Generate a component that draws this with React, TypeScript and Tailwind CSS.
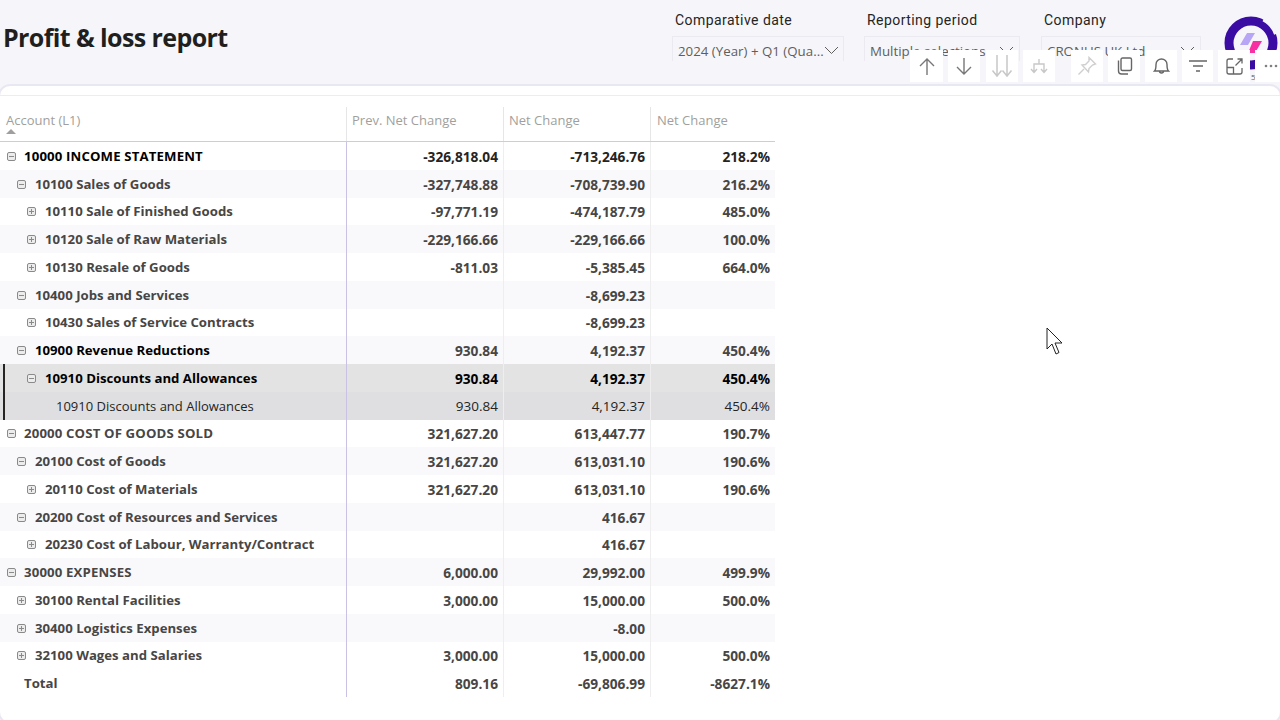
const rows: [string, number, number, string, string, string, string?][] = [
  ["10000 INCOME STATEMENT", 0, 0, "-326,818.04", "-713,246.76", "218.2%", "k"],
  ["10100 Sales of Goods", 1, 0, "-327,748.88", "-708,739.90", "216.2%"],
  ["10110 Sale of Finished Goods", 2, 1, "-97,771.19", "-474,187.79", "485.0%"],
  ["10120 Sale of Raw Materials", 2, 1, "-229,166.66", "-229,166.66", "100.0%"],
  ["10130 Resale of Goods", 2, 1, "-811.03", "-5,385.45", "664.0%"],
  ["10400 Jobs and Services", 1, 0, "", "-8,699.23", ""],
  ["10430 Sales of Service Contracts", 2, 1, "", "-8,699.23", ""],
  ["10900 Revenue Reductions", 1, 0, "930.84", "4,192.37", "450.4%", "m"],
  ["10910 Discounts and Allowances", 2, 0, "930.84", "4,192.37", "450.4%", "s"],
  ["10910 Discounts and Allowances", 3, 2, "930.84", "4,192.37", "450.4%", "l"],
  ["20000 COST OF GOODS SOLD", 0, 0, "321,627.20", "613,447.77", "190.7%"],
  ["20100 Cost of Goods", 1, 0, "321,627.20", "613,031.10", "190.6%"],
  ["20110 Cost of Materials", 2, 1, "321,627.20", "613,031.10", "190.6%"],
  ["20200 Cost of Resources and Services", 1, 0, "", "416.67", ""],
  ["20230 Cost of Labour, Warranty/Contract", 2, 1, "", "416.67", ""],
  ["30000 EXPENSES", 0, 0, "6,000.00", "29,992.00", "499.9%"],
  ["30100 Rental Facilities", 1, 1, "3,000.00", "15,000.00", "500.0%"],
  ["30400 Logistics Expenses", 1, 1, "", "-8.00", ""],
  ["32100 Wages and Salaries", 1, 1, "3,000.00", "15,000.00", "500.0%"],
  ["Total", 0, 2, "809.16", "-69,806.99", "-8627.1%"],
];

function Box({ plus }: { plus: boolean }) {
  return (
    <svg width="9" height="9" viewBox="0 0 9 9" fill="none" stroke="#8a8a8a" strokeWidth="1" className="shrink-0">
      <rect x="0.5" y="0.5" width="8" height="8" rx="1.5" fill="#ececec" />
      <path d="M2 4.500h5" />
      {plus && <path d="M4.500 2v5" />}
    </svg>
  );
}

function Tool({ children, className }: { children: React.ReactNode; className: string }) {
  return <div className={"bg-white h-[32px] flex items-center justify-center " + className}>{children}</div>;
}

function Filter({ label, value, w, ml }: { label: string; value: string; w: string; ml: string }) {
  return (
    <div className={"flex flex-col " + w + " " + ml}>
      <div className="h-[36px] pt-[12px] pl-[3px] text-[14px] leading-[16px] tracking-[0.45px] text-[#252423] font-['Roboto',sans-serif] whitespace-nowrap">{label}</div>
      <div className="h-[25px] border border-b-0 border-[#eaeaf0] pl-[5px] pr-[5px] pt-[5px] flex justify-between overflow-hidden">
        <span className="text-[13.3px] leading-[19px] text-[#605e5c] whitespace-nowrap">{value}</span>
        <svg width="15" height="9" viewBox="0 0 15 9" fill="none" stroke="#605e5c" strokeWidth="1" className="mt-[4px] shrink-0"><path d="M1 1l6.500 6.500L14 1" /></svg>
      </div>
    </div>
  );
}

export default function App() {
  return (
    <div className="relative w-[1280px] h-[720px] overflow-hidden bg-[#f6f6fa] font-['Open_Sans','Noto_Sans',sans-serif]">
      <div className="absolute -left-[2px] top-[84px] w-[1284px] h-[640px] bg-white rounded-[12px] border-2 border-[#e8e8f2]" />
      <div className="absolute left-0 top-[95px] w-[1280px] border-t border-[#ececf4]" />

      <div className="relative h-[85px] flex">
        <h1 className="ml-[3px] mt-[20px] text-[25px] leading-[34px] font-bold text-[#201f1e] whitespace-nowrap tracking-[-0.6px] w-[669px]">Profit &amp; loss report</h1>
        <Filter label="Comparative date" value="2024 (Year) + Q1 (Qua..." w="w-[172px]" ml="" />
        <Filter label="Reporting period" value="Multiple selections" w="w-[156px]" ml="ml-[20px]" />
        <Filter label="Company" value="CRONUS UK Ltd" w="w-[160px]" ml="ml-[21px]" />
      </div>

      <svg className="absolute left-[1224px] top-[16px]" width="54" height="54" viewBox="0 0 54 54" fill="none">
        <circle cx="27" cy="27" r="22" stroke="#3a0ca3" strokeWidth="9" />
        <path d="M39.500 3.500A26.500 26.500 0 0 1 52 18" stroke="#f6f6fa" strokeWidth="4" />
        <path d="M16 29l7-12h8l-7 12z" fill="#b7a5f5" />
        <path d="M24 37l5-12h9l-7 12z" fill="#f72fa3" />
      </svg>
      <div className="absolute left-[1251px] top-[63px] w-[5px] h-[6px] bg-[#3a0ca3]" />
      <div className="absolute left-[1251px] top-[72px] text-[8px] leading-[9px] text-[#605e5c]">5</div>

      <div className="absolute left-[910px] top-[50px] flex gap-[5px]">
        <Tool className="w-[33px]"><svg width="18" height="19" viewBox="0 0 18 19" fill="none" stroke="#777" strokeWidth="1.400"><path d="M9 18V2M2 9l7-7 7 7" /></svg></Tool>
        <Tool className="w-[32px]"><svg width="18" height="19" viewBox="0 0 18 19" fill="none" stroke="#777" strokeWidth="1.400"><path d="M9 1v16M2 10l7 7 7-7" /></svg></Tool>
        <Tool className="w-[32px] ml-[1px]"><svg width="22" height="24" viewBox="0 0 22 24" fill="none" stroke="#c8c8c8" strokeWidth="1.500"><path d="M6 1v21M1.500 16.500L6 22l4.500-5.500M16 1v21M11.500 16.500L16 22l4.500-5.500" /></svg></Tool>
        <Tool className="w-[32px]"><svg width="18" height="16" viewBox="0 0 18 16" fill="none" stroke="#c8c8c8" strokeWidth="1.400"><path d="M9 1v5M4 14V6h10v8M1 11l3 3.500L7 11M11 11l3 3.500 3-3.500" /></svg></Tool>
      </div>
      <div className="absolute left-[1071px] top-[50px] flex gap-[5px]">
        <Tool className="w-[32px]"><svg width="20" height="20" viewBox="0 0 20 20" fill="none" stroke="#cfcfcf" strokeWidth="1.400"><path d="M12 1.500l6.500 6.500-3 1-3.500 3.500-.5 3.500L5 9l3.500-.5L12 5zM7 13l-5.500 5.500" /></svg></Tool>
        <Tool className="w-[32px]"><svg width="17" height="18" viewBox="0 0 17 18" fill="none" stroke="#666" strokeWidth="1.400"><rect x="5" y="1" width="10.500" height="12.500" rx="1.500" /><path d="M2.500 3.500v10.500a3 3 0 0 0 3 3H12" /></svg></Tool>
        <Tool className="w-[32px]"><svg width="17" height="18" viewBox="0 0 17 18" fill="none" stroke="#666" strokeWidth="1.400"><path d="M1.500 14c1.500-1.500 1.500-4 1.500-6.500a5.500 5.500 0 0 1 11 0c0 2.500 0 5 1.500 6.500zM6.500 14a2 2 0 0 0 4 0" /></svg></Tool>
        <Tool className="w-[31px]"><svg width="18" height="12" viewBox="0 0 18 12" fill="none" stroke="#666" strokeWidth="1.400"><path d="M0 1h18M4 6h10M7 11h4" /></svg></Tool>
        <Tool className="w-[32px]"><svg width="17" height="17" viewBox="0 0 17 17" fill="none" stroke="#666" strokeWidth="1.300"><path d="M7 1H3a2 2 0 0 0-2 2v11a2 2 0 0 0 2 2h11a2 2 0 0 0 2-2v-4M9.500 7.500L16 1M11.500 1H16v4.500M1 9.500h6.500V16" /></svg></Tool>
        <Tool className="w-[25px] justify-end pr-[2px]"><svg width="14" height="4" viewBox="0 0 14 4" fill="#808080"><circle cx="2" cy="2" r="1.300" /><circle cx="7" cy="2" r="1.300" /><circle cx="12" cy="2" r="1.300" /></svg></Tool>
      </div>

      <div className="relative mt-[22px] w-[775px]">
        <div className="flex h-[35px] border-b border-[#cfcbdc] text-[#a19f9d] text-[13px] leading-[19px]">
          <div className="w-[347px] border-r border-[#e6e6e6] pl-[6px] pt-[4px] relative">
            Account (L1)
            <div className="absolute left-[6px] top-[22px] w-0 h-0 border-x-[5px] border-x-transparent border-b-[5px] border-b-[#a19f9d]" />
          </div>
          <div className="w-[157px] border-r border-[#e6e6e6] pl-[5px] pt-[4px]">Prev. Net Change</div>
          <div className="w-[147px] border-r border-[#e6e6e6] pl-[5px] pt-[4px]">Net Change</div>
          <div className="w-[124px] pl-[6px] pt-[4px]">Net Change</div>
        </div>
        {rows.map((r, i) => {
          const flag = r[6];
          const total = r[0] === "Total";
          const bg = flag === "s" ? "bg-[#e3e3e3]" : flag === "l" ? "bg-[#dfdfe1]" : i % 2 === 1 && !total ? "bg-[#f9f9fc]" : "bg-white";
          const labelColor = flag === "k" || flag === "m" || flag === "s" ? "text-[#000000]" : flag === "l" ? "text-[#252423]" : "text-[#484644]";
          const valueColor = flag === "s" ? "text-[#000000]" : flag === "l" ? "text-[#252423]" : flag === "k" ? "text-[#252423]" : "text-[#484644]";
          const weight = flag === "l" ? "font-normal" : "font-bold";
          const valueSize = flag === "l" ? "text-[13.5px]" : "text-[13.7px]";
          const pad = ["pl-[7px]", "pl-[17px]", "pl-[27px]", "pl-[56px]"][r[1]];
          const selected = flag === "s" || flag === "l";
          const noBox = r[2] === 2;
          const upper = r[1] === 0 && !total;
          const cell = "h-full pt-[1px] flex items-center justify-end pr-[5px] " + valueColor + " " + valueSize;
          return (
            <div key={i} className={"flex h-[27.75px] items-center leading-[19px] whitespace-nowrap " + bg + " " + weight}>
              <div className={"w-[347px] h-full pt-[1px] flex items-center border-r border-[#c9c2e4] relative text-[13.2px] " + labelColor + " " + (upper ? "tracking-[0.15px] " : "") + (total ? "pl-[24px]" : pad)}>
                {selected && <div className="absolute left-[3px] top-0 bottom-0 w-[2px] bg-[#252423]" />}
                {!noBox && <Box plus={r[2] === 1} />}
                {!noBox && <span className={r[1] === 0 ? "w-[8px]" : "w-[9px]"} />}
                <span className={flag === "l" ? "text-[13px]" : ""}>{r[0]}</span>
              </div>
              <div className={"w-[157px] border-r border-[#eeeeee] " + cell}>{r[3]}</div>
              <div className={"w-[147px] border-r border-[#eeeeee] " + cell}>{r[4]}</div>
              <div className={"w-[124px] " + cell}>{r[5]}</div>
            </div>
          );
        })}
      </div>

      <svg className="absolute left-[1046px] top-[327px]" width="19" height="28" viewBox="0 0 19 28" fill="#fff" stroke="#222" strokeWidth="1"><path d="M1 1v21l5-5 4 10 3-1.500-4-9.500h7z" /></svg>
    </div>
  );
}
